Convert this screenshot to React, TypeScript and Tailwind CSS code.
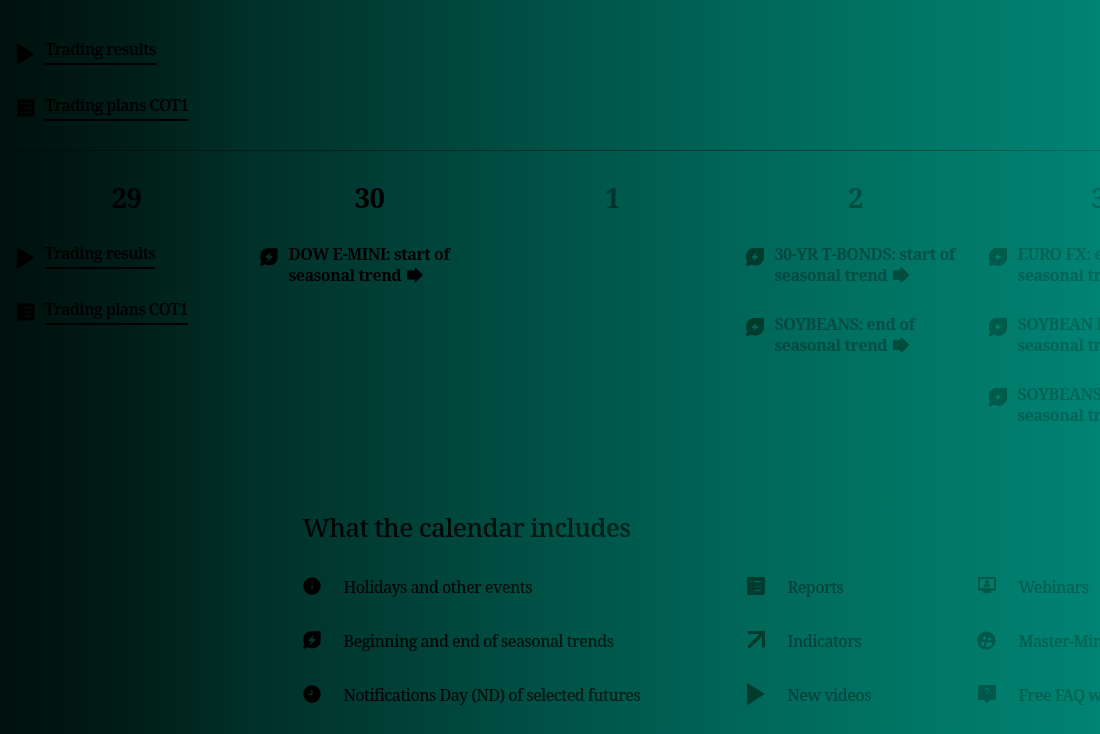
import type { ReactNode } from "react";
import { MdSupervisedUserCircle } from "react-icons/md";

function Play() {
  return (
    <svg className="h-[22px] w-[18px]" viewBox="0 0 18 22" fill="currentColor">
      <path d="M0.3 0.3 17.5 11 0.3 21.7z" />
    </svg>
  );
}

function List() {
  return (
    <svg className="size-[18px]" viewBox="0 0 18 18" fill="currentColor">
      <path
        fillRule="evenodd"
        d="M1 0.3h15.8q.7 0 .7.7v15.8q0 .7-.7.7H1q-.7 0-.7-.7V1q0-.7.7-.7zM4 4v1.300h1.600V4zM7 4v1.300h7V4zM4 8.400v1.300h1.600V8.400zM7 8.400v1.300h7V8.400zM4 12.700V14h1.600v-1.300zM7 12.700V14h7v-1.300z"
      />
    </svg>
  );
}

function Leaf() {
  return (
    <svg className="size-[18px]" viewBox="0 0 18 18" fill="currentColor">
      <path
        fillRule="evenodd"
        d="M8 .3h9.600v9.200c0 4.600-3.400 7.800-8 7.800-2 0-3.500-.4-4.800-1.300L3 17.600H.300V15.800L1.500 13.500C.7 12.200.3 10.700.3 8.800.3 3.800 3.500.3 8 .3zM11 3.800 5 9.500l3.400.9-2.400 4.300L13 8.600l-3.400-.9z"
      />
    </svg>
  );
}

function Info() {
  return (
    <svg className="size-[18px]" viewBox="0 0 18 18" fill="currentColor">
      <path
        fillRule="evenodd"
        d="M9 .3a8.700 8.700 0 1 1 0 17.400A8.700 8.700 0 0 1 9 .3zM8.500 5v1.300h1.100V5zM8.500 7.800v5h1.100v-5z"
      />
    </svg>
  );
}

function Clock() {
  return (
    <svg className="size-[18px]" viewBox="0 0 18 18" fill="currentColor">
      <path fillRule="evenodd" d="M9 .3a8.700 8.700 0 1 1 0 17.400A8.700 8.700 0 0 1 9 .3zM8.300 4.500v4.300H5v1.100h4.400V4.500z" />
    </svg>
  );
}

function UpRight() {
  return (
    <svg className="size-[18px]" viewBox="0 0 18 18" fill="currentColor">
      <path d="M1 .3h16.700v16H15V4.900L2.500 17.300.5 15.300 12.900 2.900H1z" />
    </svg>
  );
}

function Monitor() {
  return (
    <svg className="size-[18px]" viewBox="0 0 18 18" fill="currentColor">
      <path fillRule="evenodd" d="M0.300.3h17.400v13h-5.200v1.200H13v1.600H5v-1.600h.6v-1.200H.3zM2 2v9.600h14V2z" />
      <circle cx="9" cy="4.900" r="1.700" />
      <path d="M5.900 10C5.900 7.800 7 7.200 9 7.200s3.100.6 3.100 2.800z" />
    </svg>
  );
}

function Question() {
  return (
    <svg className="size-[18px]" viewBox="0 0 18 18" fill="currentColor">
      <path
        fillRule="evenodd"
        d="M1.800.3h14.400q1.500 0 1.500 1.500v11.300q0 1.500-1.500 1.500h-4L9 17.700l-3.200-3.100h-4Q.3 14.600.3 13.100V1.800Q.3.3 1.800.3zM6.300 5.400h1.400q0-1.400 1.300-1.400t1.200 1.200q0 .7-.8 1.400-1.200 1-1.200 2.500h1.400q0-1 .8-1.700 1.200-1 1.200-2.300 0-2.300-2.600-2.300T6.300 5.400zM8.200 10.200v1.500h1.400v-1.500z"
      />
    </svg>
  );
}

function BlockArrow() {
  return (
    <svg className="ml-[6px] inline-block h-4 w-4 align-[-2px] text-black" viewBox="0 0 16 16" fill="currentColor">
      <path d="M1.200 3.400h6.500V1.400q0-1.400 1-.5l6.700 6.400q.7.700 0 1.400l-6.700 6.400q-1 .9-1-.5v-2H1.200q-.9 0-.9-.9V4.300q0-.9.9-.9z" />
    </svg>
  );
}

function LinkRow({ icon, children }: { icon: ReactNode; children: ReactNode }) {
  return (
    <div className="flex h-[55.5px] items-start">
      <div className="w-[28px] shrink-0">{icon}</div>
      <a className="h-[26px] border-b-2 border-black text-[16px] leading-[21.5px] font-semibold tracking-[-0.66px] whitespace-nowrap">{children}</a>
    </div>
  );
}

function Links() {
  return (
    <div className="pl-[12px] text-black">
      <LinkRow icon={<div className="pt-[4px]"><Play /></div>}>Trading results</LinkRow>
      <LinkRow icon={<div className="pt-[4px]"><List /></div>}>Trading plans COT1</LinkRow>
    </div>
  );
}

function Trend({ children }: { children: ReactNode }) {
  return (
    <div className="flex h-[70px] items-start pl-[12px]">
      <div className="w-[29px] shrink-0 pt-[5px] text-black">
        <Leaf />
      </div>
      <div className="pt-px text-[16px] leading-[21px] font-bold tracking-[-0.45px] whitespace-nowrap">
        <div>{children}</div>
        <div>
          seasonal trend
          <BlockArrow />
        </div>
      </div>
    </div>
  );
}

function Day({ n, tone, children }: { n: number; tone: string; children?: ReactNode }) {
  return (
    <div className={`w-[243px] shrink-0 ${tone}`}>
      <div className="h-[63px] pl-[1px] text-center text-[27.5px] leading-[36px] font-bold tracking-[-0.5px]">{n}</div>
      {children}
    </div>
  );
}

function Item({ icon, children }: { icon: ReactNode; children: ReactNode }) {
  return (
    <div className="flex h-[54px] items-center">
      <div className="flex w-[41px] shrink-0 items-center text-black">{icon}</div>
      <div className="pt-px text-[16px] font-medium tracking-[-0.56px] whitespace-nowrap">{children}</div>
    </div>
  );
}

export default function App() {
  return (
    <div className="relative isolate h-[734px] w-[1100px] overflow-hidden bg-[linear-gradient(90deg,#00100c_0px,#001611_60px,#001d18_130px,#00271f_190px,#00302a_250px,#003c34_370px,#004c42_500px,#005b4f_640px,#006759_750px,#007262_870px,#007b6c_1000px,#008374_1100px)] font-['Noto_Serif','DejaVu_Serif_Condensed','DejaVu_Serif',serif] text-black/90">
      <div className="ml-[10px] h-[151px] w-[1215px] border-b border-black/40 pt-[39px]">
        <div className="-ml-[5px]">
          <Links />
        </div>
      </div>
      <div className="ml-[4.5px] flex h-[333px] w-[1215px] pt-[29px]">
        <Day n={29} tone="text-black">
          <Links />
        </Day>
        <Day n={30} tone="text-black">
          <Trend>DOW E-MINI: start of</Trend>
        </Day>
        <Day n={1} tone="text-black/40" />
        <Day n={2} tone="text-black/32">
          <Trend>30-YR T-BONDS: start of</Trend>
          <Trend>SOYBEANS: end of</Trend>
        </Day>
        <Day n={3} tone="text-black/24">
          <Trend>EURO FX: end of</Trend>
          <Trend>SOYBEAN MEAL: end of</Trend>
          <Trend>SOYBEANS OIL: end of</Trend>
        </Day>
      </div>
      <section className="ml-[302.5px] w-[912px] pt-[26px]">
        <h2 className="h-[49px] text-[26px] leading-[34px] font-medium tracking-[-0.71px] whitespace-nowrap">What the calendar includes</h2>
        <div className="grid grid-cols-[444px_231px_237px]">
          <div>
            <Item icon={<Info />}>Holidays and other events</Item>
            <Item icon={<Leaf />}>Beginning and end of seasonal trends</Item>
            <Item icon={<Clock />}>Notifications Day (ND) of selected futures</Item>
          </div>
          <div className="text-black/42">
            <Item icon={<List />}>Reports</Item>
            <Item icon={<UpRight />}>Indicators</Item>
            <Item icon={<Play />}>New videos</Item>
          </div>
          <div className="text-black/32">
            <Item icon={<Monitor />}>Webinars</Item>
            <Item icon={<MdSupervisedUserCircle className="-m-[1.5px] size-[21px]" />}>Master-Mind</Item>
            <Item icon={<Question />}>Free FAQ webinars</Item>
          </div>
        </div>
      </section>
      <div className="pointer-events-none absolute inset-0 bg-[linear-gradient(90deg,#000000_0px,#000000_400px,#00160f_520px,#002a1f_640px,#003c2d_760px,#004b3b_890px,#005b4a_1000px,#006856_1100px)] mix-blend-lighten" />
    </div>
  );
}
